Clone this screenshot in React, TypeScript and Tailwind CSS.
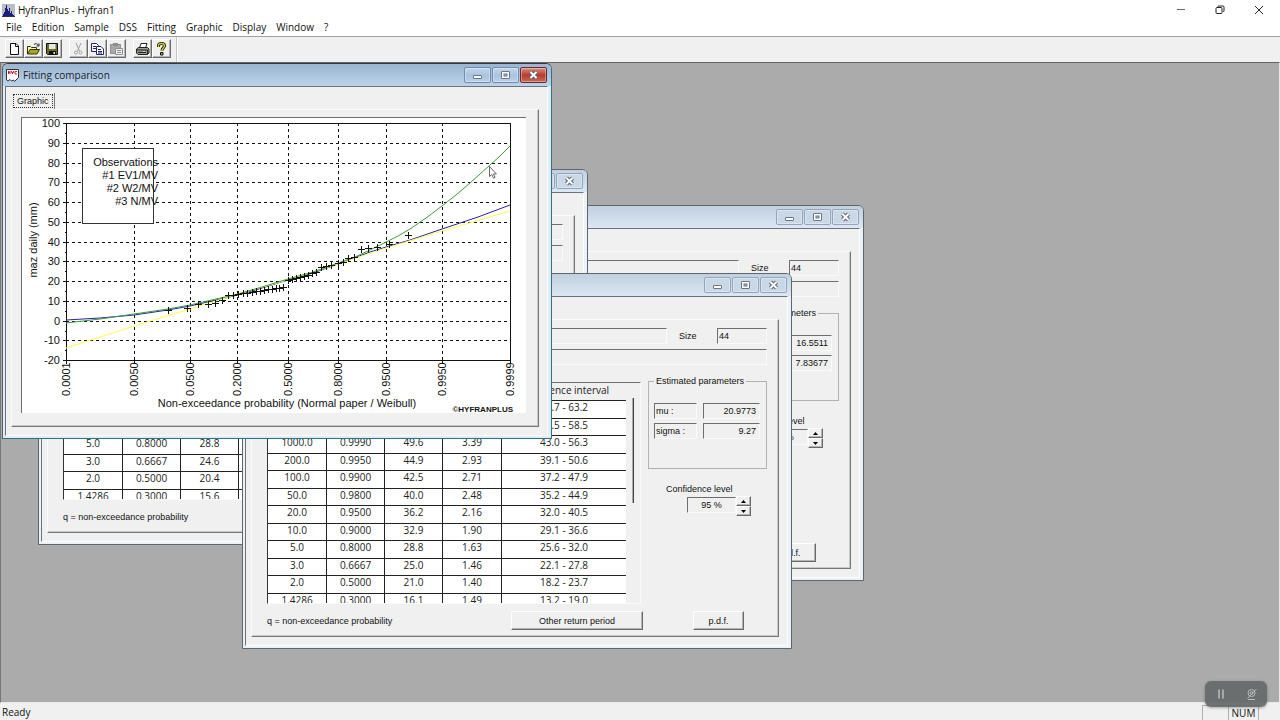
import { useId } from "react";
import type { ReactNode } from "react";

type StatRow = [string, string, string, string, string];

type StatsData = {
  rows: StatRow[];
  params: { name: string; value: string }[];
};

const normalFit: StatsData = {
  rows: [
    ["10000.0", "0.9999", "55.5", "3.96", "47.7 - 63.2"],
    ["2000.0", "0.9995", "51.5", "3.57", "44.5 - 58.5"],
    ["1000.0", "0.9990", "49.6", "3.39", "43.0 - 56.3"],
    ["200.0", "0.9950", "44.9", "2.93", "39.1 - 50.6"],
    ["100.0", "0.9900", "42.5", "2.71", "37.2 - 47.9"],
    ["50.0", "0.9800", "40.0", "2.48", "35.2 - 44.9"],
    ["20.0", "0.9500", "36.2", "2.16", "32.0 - 40.5"],
    ["10.0", "0.9000", "32.9", "1.90", "29.1 - 36.6"],
    ["5.0", "0.8000", "28.8", "1.63", "25.6 - 32.0"],
    ["3.0", "0.6667", "25.0", "1.46", "22.1 - 27.8"],
    ["2.0", "0.5000", "21.0", "1.40", "18.2 - 23.7"],
    ["1.4286", "0.3000", "16.1", "1.49", "13.2 - 19.0"],
  ],
  params: [
    { name: "mu :", value: "20.9773" },
    { name: "sigma :", value: "9.27" },
  ],
};

const weibullFit: StatsData = {
  rows: normalFit.rows.map((r) => {
    if (r[0] === "3.0") return [r[0], r[1], "24.6", r[3], r[4]];
    if (r[0] === "2.0") return [r[0], r[1], "20.4", r[3], r[4]];
    if (r[0] === "1.4286") return [r[0], r[1], "15.6", r[3], r[4]];
    return r;
  }),
  params: normalFit.params,
};

const gumbelFit: StatsData = {
  rows: normalFit.rows,
  params: [
    { name: "u :", value: "16.5511" },
    { name: "alpha :", value: "7.83677" },
  ],
};

const menus = ["File", "Edition", "Sample", "DSS", "Fitting", "Graphic", "Display", "Window", "?"];

const sunken = "border border-t-[#6e6e6e] border-l-[#6e6e6e] border-r-[#fafafa] border-b-[#fafafa] bg-[#f0f0f0]";
const raised = "border border-t-white border-l-white border-r-[#6a6a6a] border-b-[#6a6a6a] bg-[#f0f0f0] shadow-[inset_-1px_-1px_0_#b4b4b4]";

/* ---------- toolbar ---------- */

function ToolButton({ label, children }: { label: string; children: ReactNode }) {
  return (
    <button aria-label={label} className={`flex h-[19px] w-[19px] items-center justify-center ${raised}`}>
      <svg width="15" height="14" viewBox="0 0 15 14" fill="none">
        {children}
      </svg>
    </button>
  );
}

function Toolbar() {
  return (
    <div className="flex h-[26px] items-stretch border-t border-[#a0a0a0] bg-[#f0f0f0]">
      <div className="flex items-center gap-[7px] border-r border-[#c4c4c4] pr-[5px] pb-[2px] pl-[5px] shadow-[1px_0_0_#fff]">
        <div className="flex">
          <ToolButton label="New">
            <path d="M3.5 1.5h5.5l2.5 2.5v8.5h-8z" fill="#fff" stroke="#111" />
            <path d="M8.5 1.5v3h3" stroke="#111" />
          </ToolButton>
          <ToolButton label="Open">
            <path d="M1.5 12V4.5h3l1 1h5v2" fill="#f5f59a" stroke="#333300" />
            <path d="M1.5 12l2.5-4.5h9.5L11 12z" fill="#a5a52a" stroke="#333300" />
            <path d="M8 2.5c1.5-1.5 3.5-1 4.5 1M13 1.5v2.5h-2.5" stroke="#222" />
          </ToolButton>
          <ToolButton label="Save">
            <path d="M1.5 1.5h11v11h-10l-1-1z" fill="#6f701a" stroke="#111" />
            <path d="M4 2h6.5v5H4z" fill="#e8e8e8" />
            <path d="M4 9h7v3.5H4z" fill="#111" />
            <path d="M8.5 10h1.5v2H8.5z" fill="#eee" />
          </ToolButton>
        </div>
        <div className="flex">
          <ToolButton label="Cut">
            <path d="M5 1l3.5 8M10 1L6.5 9" stroke="#a0a0a0" />
            <circle cx="5" cy="10.5" r="1.5" stroke="#a0a0a0" />
            <circle cx="9.5" cy="10.5" r="1.5" stroke="#a0a0a0" />
          </ToolButton>
          <ToolButton label="Copy">
            <path d="M1.5 1.5h5l2 2v6h-7z" fill="#fff" stroke="#26266e" />
            <path d="M3 4.5h3M3 6.5h4" stroke="#26266e" />
            <path d="M6.5 4.5h4.5l2.5 2.5v5.5h-7z" fill="#fff" stroke="#26266e" />
            <path d="M8 7.5h3M8 9.5h4M8 11h4" stroke="#26266e" />
          </ToolButton>
          <ToolButton label="Paste">
            <path d="M1.5 2.5h10v9h-10z" fill="#a8a8a8" stroke="#8e8e8e" />
            <path d="M4 1h5v3H4z" fill="#8e8e8e" />
            <path d="M6.5 6.5h7v6h-7z" fill="#f0f0f0" stroke="#8e8e8e" />
            <path d="M8 8.5h4M8 10.5h4" stroke="#8e8e8e" />
          </ToolButton>
        </div>
        <div className="flex">
          <ToolButton label="Print">
            <path d="M4.5 6l1.5-4.5h6L10.5 6z" fill="#fff" stroke="#222" />
            <path d="M1.5 7l2-1.5h9l1.5 1.5v4l-2 1.5h-9l-1.5-1.5z" fill="#999" stroke="#222" />
            <path d="M1.5 8h11v4.5M3 10.5h8" stroke="#222" />
            <path d="M8 9.5h2" stroke="#dede30" />
          </ToolButton>
          <ToolButton label="Help">
            <path d="M4.5 5V3.5c0-1.5 1-2 3-2s3 .5 3 2.5c0 1.5-2.5 2-2.5 4.5" stroke="#111" strokeWidth="3" />
            <path d="M4.5 5V3.5c0-1.5 1-2 3-2s3 .5 3 2.5c0 1.5-2.5 2-2.5 4.5" stroke="#d2d21e" strokeWidth="1.4" />
            <path d="M6.5 10.5h2.5v2.5H6.5z" fill="#b5b520" stroke="#111" />
          </ToolButton>
        </div>
      </div>
    </div>
  );
}

/* ---------- child windows ---------- */

function CaptionButton({ kind, active }: { kind: "min" | "max" | "close"; active?: boolean }) {
  const idle = active
    ? "border-[#6f8cab] bg-linear-to-b from-[#c3d7ec] via-[#a9c3de] to-[#b9d0e8]"
    : "border-[#93a5bb] bg-[#c9d7e6]";
  const red = "border-[#6b2a2a] bg-linear-to-b from-[#d99085] via-[#b8392c] to-[#c9695a]";
  return (
    <button
      aria-label={kind}
      className={`flex h-4 w-[27px] items-center justify-center rounded-[2px] border shadow-[inset_0_0_0_1px_rgba(255,255,255,0.35)] ${
        active && kind === "close" ? red : idle
      }`}
    >
      <svg width="11" height="10" viewBox="0 0 11 10" fill="none">
        {kind === "min" && <rect x="1.5" y="5.5" width="8" height="3" rx="0.5" fill="#fff" stroke="#6b7684" />}
        {kind === "max" && (
          <>
            <rect x="1.5" y="1.5" width="8" height="7" rx="0.5" fill="#fff" stroke="#6b7684" />
            <rect x="4" y="4" width="3" height="2" fill="#a9c3de" stroke="#6b7684" />
          </>
        )}
        {kind === "close" && (
          <>
            <path d="M2.5 2l6 6M8.5 2l-6 6" stroke="#5b6470" strokeWidth="4" />
            <path d="M2.5 2l6 6M8.5 2l-6 6" stroke="#fff" strokeWidth="2" />
          </>
        )}
      </svg>
    </button>
  );
}

type ChildWindowProps = {
  place: string;
  active?: boolean;
  icon?: ReactNode;
  title?: string;
  tab?: string;
  children: ReactNode;
};

function ChildWindow({ place, active, icon, title, tab, children }: ChildWindowProps) {
  const frame = active
    ? "border-t-[#2c3a45] border-l-[#55606a] border-r-[#2f7382] border-b-[#2f7382] bg-[#e2ecf5]"
    : "border-[#5d656e] bg-[#ebf1f6]";
  const bar = active ? "from-[#9ab4d1] to-[#bcd3ea]" : "from-[#c1cfdf] to-[#dbe7f3]";
  return (
    <section className={`absolute flex h-[376px] w-[550px] flex-col overflow-hidden rounded-t-[6px] border ${frame} ${place}`}>
      <header className={`flex h-[22px] shrink-0 items-center bg-linear-to-b pr-1 pl-[3px] ${bar}`}>
        {icon}
        <h2 className="ml-1 flex-1 text-[10px] leading-4 text-[#1b1f26]">{title}</h2>
        <div className="flex gap-px">
          <CaptionButton kind="min" active={active} />
          <CaptionButton kind="max" active={active} />
          <CaptionButton kind="close" active={active} />
        </div>
      </header>
      <div className="mr-[3px] mb-[2px] ml-[2px] flex flex-1 flex-col border border-t-[#6b7279] border-l-[#6b7279] border-r-[#fbfdff] border-b-[#fbfdff] bg-[#f0f0f0] pr-2 pb-2 pl-[5px]">
        <div className="flex h-[22px] shrink-0 items-end pl-[2px]">
          {tab && (
            <div className="border-r border-[#777] pr-px pb-px">
              <button className="h-[14px] border border-dotted border-[#333] px-[3px] font-['Liberation_Sans',sans-serif] text-[9px] leading-3">
                {tab}
              </button>
            </div>
          )}
        </div>
        <div className="flex-1 border border-t-[#fbfbfb] border-l-[#fbfbfb] border-r-[#777] border-b-[#777] shadow-[inset_-1px_-1px_0_#c8c8c8]">
          {children}
        </div>
      </div>
    </section>
  );
}

function StatsPanel({ data }: { data: StatsData }) {
  const id = useId();
  return (
    <div className="flex flex-col pt-2 pr-[11px] pl-[15px] font-['Liberation_Sans',sans-serif] text-[9px] leading-[10px]">
      <div className="flex h-4 items-center">
        <input readOnly aria-label="Title" className={`h-4 min-w-0 flex-1 ${sunken}`} />
        <label htmlFor={`${id}-size`} className="ml-3 w-[38px]">Size</label>
        <input id={`${id}-size`} readOnly value="44" className={`h-4 w-[50px] pl-px ${sunken}`} />
      </div>
      <input readOnly aria-label="Description" className={`mt-[5px] h-4 ${sunken}`} />

      <div className="mt-[11px] flex">
        <div className="mt-[6px] flex h-[222px] w-[374px] overflow-hidden border border-t-[#6e6e6e] border-l-[#333] border-r-[#fafafa] border-b-[#fafafa]">
          <table className="w-[358px] table-fixed border-separate border-spacing-0 self-start text-center font-['Open_Sans',sans-serif] text-[10px] leading-[14px] text-[#222]">
            <thead>
              <tr className="bg-[#f0f0f0]">
                <th className="h-[18px] w-[59px] border-r border-b border-[#222] p-0 font-normal">T</th>
                <th className="w-[58px] border-r border-b border-[#222] p-0 font-normal">q</th>
                <th className="w-[58px] border-r border-b border-[#222] p-0 font-normal">XT</th>
                <th className="w-[59px] border-r border-b border-[#222] p-0 font-normal">Std. dev.</th>
                <th className="border-b border-[#222] p-0 align-top font-normal">Confidence interval</th>
              </tr>
            </thead>
            <tbody>
              {data.rows.map((row) => (
                <tr key={row[0]} className="h-[17px] bg-white leading-[12px] odd:h-[18px]">
                  {row.map((cell, i) => (
                    <td key={i} className="border-r border-b border-[#222] p-0 align-top last:border-r-0">
                      {cell}
                    </td>
                  ))}
                </tr>
              ))}
            </tbody>
          </table>
          <div className="flex flex-1 justify-center pt-[15px]">
            <div className="h-[105px] w-[2px] border-r border-[#444] bg-[#aaa]" />
          </div>
        </div>

        <div className="ml-[7px] flex w-[119px] flex-col">
          <fieldset className="h-[93px] border border-[#b2b2b2] pl-[5px]">
            <legend className="px-[2px]">Estimated parameters</legend>
            <div className="flex flex-col gap-1 pt-[17px]">
              {data.params.map((p) => (
                <div key={p.name} className="flex gap-[6px]">
                  <label htmlFor={`${id}-${p.name}`} className={`h-4 w-[43px] pl-px leading-[14px] ${sunken}`}>
                    {p.name}
                  </label>
                  <input
                    id={`${id}-${p.name}`}
                    readOnly
                    value={p.value}
                    className={`h-4 w-[57px] pr-[3px] text-right ${sunken}`}
                  />
                </div>
              ))}
            </div>
          </fieldset>
          <label htmlFor={`${id}-level`} className="mt-[15px] ml-[18px]">Confidence level</label>
          <div className="mt-[2px] ml-[39px] flex items-start">
            <input id={`${id}-level`} readOnly value="95 %" className={`mt-px h-4 w-[49px] text-center ${sunken}`} />
            <div className="flex flex-col">
              <button aria-label="Increase level" className={`flex h-[10px] w-[15px] items-center justify-center ${raised}`}>
                <svg width="5" height="3" viewBox="0 0 5 3"><path d="M0 3L2.5 0L5 3z" /></svg>
              </button>
              <button aria-label="Decrease level" className={`flex h-[10px] w-[15px] items-center justify-center ${raised}`}>
                <svg width="5" height="3" viewBox="0 0 5 3"><path d="M0 0L2.5 3L5 0z" /></svg>
              </button>
            </div>
          </div>
        </div>
      </div>

      <div className="mt-[7px] flex h-[19px] items-center pr-[23px]">
        <p className="flex-1">q = non-exceedance probability</p>
        <button className={`h-[19px] w-[132px] ${raised}`}>Other return period</button>
        <button className={`ml-[50px] h-[19px] w-[51px] ${raised}`}>p.d.f.</button>
      </div>
    </div>
  );
}

/* ---------- chart ---------- */

const yTicks = [
  [100, 123], [90, 143], [80, 163], [70, 182], [60, 202], [50, 222], [40, 242],
  [30, 261], [20, 281], [10, 301], [0, 321], [-10, 340], [-20, 360],
];

const xTicks: [string, number][] = [
  ["0.0001", 66], ["0.0050", 134], ["0.0500", 190], ["0.2000", 237], ["0.5000", 288],
  ["0.8000", 338], ["0.9500", 386], ["0.9950", 442], ["0.9999", 510],
];

const observations = [
  [168, 310], [187, 308], [198, 304], [208, 304], [215, 303], [222, 300], [228, 295], [233, 295],
  [238, 294], [243, 293], [247, 293], [252, 292], [256, 291], [260, 291], [264, 290], [268, 289],
  [272, 289], [276, 288], [279, 288], [283, 287], [288, 280], [292, 279], [296, 278], [300, 277],
  [304, 276], [308, 275], [312, 273], [316, 272], [321, 267], [326, 266], [331, 265], [338, 263],
  [343, 262], [348, 258], [354, 257], [361, 249], [368, 248], [377, 247], [389, 244], [408, 235],
];

const curves = [
  {
    color: "#2a23a0",
    points: "66,320 100,318 134,315 168,310 190,306 216,300 238,295 262,288 288,280 313,273 338,264 370,252 386,247 410,240 442,229 478,217 510,205",
  },
  {
    color: "#ffff50",
    points: "66,348 100,337 134,326 190,309 238,294 288,280 338,264 386,248 442,231 510,211",
  },
  {
    color: "#3d9a3d",
    points: "66,323 100,319 134,314 168,309 190,305 216,299 238,294 262,287 288,279 313,272 338,263 355,257 370,250 386,242 398,236 410,229 426,218 442,206 456,195 470,183 480,174 490,165 500,156 510,146",
  },
];

const legend = ["Observations", "#1 EV1/MV", "#2 W2/MV", "#3 N/MV"];

function FittingChart() {
  return (
    <svg
      width="504"
      height="295"
      viewBox="22 118 504 295"
      className="block bg-white font-['Liberation_Sans',sans-serif] text-[11px]"
      fill="#111"
    >
      <g stroke="#111" strokeDasharray="3 3" shapeRendering="crispEdges">
        {yTicks.slice(1, -1).map(([v, y]) => (
          <line key={v} x1="66" x2="510" y1={y + 0.5} y2={y + 0.5} />
        ))}
        {xTicks.slice(1, -1).map(([v, x]) => (
          <line key={v} y1="123" y2="360" x1={x + 0.5} x2={x + 0.5} />
        ))}
      </g>
      <g stroke="#111" shapeRendering="crispEdges">
        <rect x="66.5" y="123.5" width="444" height="237" fill="none" />
        {yTicks.map(([v, y]) => (
          <path key={v} d={`M63 ${y + 0.5}h4${y < 360 ? `M65 ${y + 10.5}h2` : ""}`} />
        ))}
        {xTicks.map(([v, x]) => (
          <line key={v} x1={x + 0.5} x2={x + 0.5} y1="360" y2="364" />
        ))}
      </g>
      {yTicks.map(([v, y]) => (
        <text key={v} x="60" y={y + 4} textAnchor="end">{v}</text>
      ))}
      {xTicks.map(([v, x]) => (
        <text key={v} transform={`translate(${x + 4} 396) rotate(-90)`}>{v}</text>
      ))}
      <text transform="translate(37 240) rotate(-90)" textAnchor="middle">maz daily (mm)</text>
      <text x="287" y="407" textAnchor="middle">Non-exceedance probability (Normal paper / Weibull)</text>
      <text x="513" y="412" textAnchor="end" className="text-[8px] font-bold">©HYFRANPLUS</text>

      {curves.map((c) => (
        <polyline key={c.color} points={c.points} fill="none" stroke={c.color} />
      ))}
      {observations.map(([x, y]) => (
        <path key={x} d={`M${x - 3} ${y + 0.5}h7M${x + 0.5} ${y - 3}v7`} stroke="#111" shapeRendering="crispEdges" />
      ))}

      <rect x="82.5" y="148.5" width="71" height="75" fill="#fff" stroke="#333" shapeRendering="crispEdges" />
      {legend.map((t, i) => (
        <text key={t} x="158" y={166 + i * 13} textAnchor="end">{t}</text>
      ))}
      <path d="M489.5 166.5v10l2.3-2 1.7 3.7 1.6-.7-1.7-3.5h3z" fill="#fff" stroke="#555" strokeWidth="0.9" />
    </svg>
  );
}

const hyfIcon = (
  <svg width="13" height="13" viewBox="0 0 13 13" fill="none">
    <path d="M.5.5h12v8l-4 4-1-1.500-2 1-1.500-1.500-2 1.500-1.500-1z" fill="#fff" stroke="#333" />
    <path d="M2.500 2v3M4 2v3M2.500 3.500H4M5.500 2v1.500h2V2M6.500 3.500V5M11 2.500H9V5h2" stroke="#d02030" />
  </svg>
);

export default function App() {
  return (
    <div className="flex min-h-screen flex-col bg-white font-['Open_Sans',sans-serif] text-[10px] text-[#111]">
      <header className="flex h-[19px] items-center pl-[2px]">
        <svg width="13" height="14" viewBox="0 0 13 14">
          <path d="M0 1h13v13H0z" fill="#b9bcc4" />
          <path d="M1 13v-2h1V9h1V5h1V2h1v4h1v2h1V5h1v5h1V8h1v3h1v1h1v1z" fill="#1c1c7c" />
          <path d="M0 13h13v1H0z" fill="#333" />
        </svg>
        <h1 className="ml-[3px] flex-1 leading-4">HyfranPlus - Hyfran1</h1>
        <div className="flex gap-[27px] pr-[15px]">
          <button aria-label="Minimize">
            <svg width="12" height="12" viewBox="0 0 12 12"><path d="M2 5.5h8" stroke="#666" /></svg>
          </button>
          <button aria-label="Restore">
            <svg width="12" height="12" viewBox="0 0 12 12" fill="none" stroke="#222">
              <rect x="2" y="3.5" width="6" height="6" rx="1" />
              <path d="M4 3V2.5q0-.5.5-.5H9q1 0 1 1v4q0 .5-.5.5H9" />
            </svg>
          </button>
          <button aria-label="Close">
            <svg width="12" height="12" viewBox="0 0 12 12" stroke="#222"><path d="M2 2l8 8M10 2l-8 8" /></svg>
          </button>
        </div>
      </header>

      <nav className="flex h-[17px] items-center gap-[10px] pl-[6px]">
        {menus.map((m) => (
          <button key={m} className="leading-[15px]">{m}</button>
        ))}
      </nav>

      <Toolbar />

      <main className="relative flex-1 overflow-hidden border border-t-[#666] border-l-[#777] border-r-[#e8e8e8] border-b-[#e8e8e8] bg-[#ababab]">
        <ChildWindow place="left-[313px] top-[142px]">
          <StatsPanel data={gumbelFit} />
        </ChildWindow>
        <ChildWindow place="left-[37px] top-[106px]">
          <StatsPanel data={weibullFit} />
        </ChildWindow>
        <ChildWindow place="left-[241px] top-[210px]">
          <StatsPanel data={normalFit} />
        </ChildWindow>
        <ChildWindow place="left-px top-0" active icon={hyfIcon} title="Fitting comparison" tab="Graphic">
          <div className="pt-[7px] pl-[9px]">
            <div className="w-fit border-t border-l border-[#6e6e6e]">
              <FittingChart />
            </div>
          </div>
        </ChildWindow>
      </main>

      <footer className="relative flex h-[17px] items-end bg-[#f0f0f0] pr-[21px] pl-[2px]">
        <span className="flex-1 leading-[15px]">Ready</span>
        <span className="h-[15px] w-6 border-t border-l border-[#b0b0b0]" />
        <span className="ml-[2px] h-[15px] w-[31px] border-t border-r border-l border-[#b0b0b0] text-center leading-[14px]">NUM</span>
        <div className="absolute right-[13px] bottom-[13px] flex h-[26px] w-[62px] items-center justify-around rounded-[6px] bg-[#676a6b]/95 shadow-[0_1px_3px_rgba(0,0,0,0.3)]">
          <button aria-label="Pause">
            <svg width="12" height="12" viewBox="0 0 12 12"><path d="M4 1.5v9M8 1.5v9" stroke="#b9bcbd" strokeWidth="1.5" /></svg>
          </button>
          <button aria-label="Camera off">
            <svg width="12" height="12" viewBox="0 0 12 12" fill="none" stroke="#b9bcbd">
              <circle cx="5.5" cy="5" r="3.5" />
              <circle cx="5.5" cy="5" r="1.3" />
              <path d="M2 11.5h7M1.5 10.5L10.5 1" />
            </svg>
          </button>
        </div>
      </footer>
    </div>
  );
}
